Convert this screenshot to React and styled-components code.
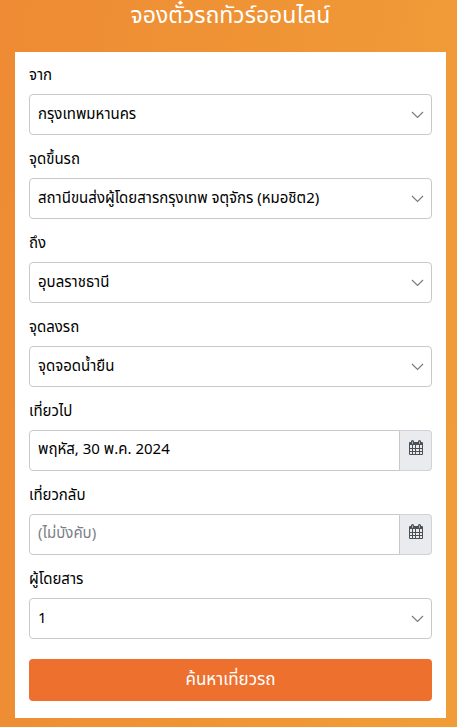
import React from "react";
import styled, { createGlobalStyle } from "styled-components";

const GlobalStyle = createGlobalStyle`
  *, *::before, *::after { box-sizing: border-box; }
  body {
    margin: 0;
    background: #ef9335;
    font-family: "Noto Sans Thai", "Open Sans", "Noto Sans", sans-serif;
    font-weight: 400;
    color: #000;
  }
  button, input, select { font-family: inherit; font-weight: inherit; color: inherit; }
`;

const Page = styled.main`
  min-height: 100vh;
  padding: 0 11px 9px 15px;
  background: linear-gradient(97deg, #ee8b34 0%, #ef9335 45%, #f09d39 100%);
`;

const Title = styled.h1`
  margin: 0;
  height: 52px;
  line-height: 32px;
  font-size: 23px;
  font-weight: 400;
  text-align: center;
  white-space: nowrap;
  color: #fff;
`;

const Form = styled.form`
  padding: 10px 14px 17px;
  background: #fff;
`;

const Field = styled.div`
  margin-bottom: 11px;
`;

const Label = styled.label`
  display: block;
  height: 32px;
  line-height: 28px;
  font-size: 15px;
`;

const SelectWrap = styled.div`
  display: grid;
  align-items: center;
  & > * { grid-area: 1 / 1; }
`;

const Select = styled.select`
  appearance: none;
  width: 100%;
  height: 41px;
  padding: 0 32px 1px 8px;
  border: 1px solid #c8c9cb;
  border-radius: 4px;
  background: #fff;
  font-size: 15px;
`;

const Chevron = styled.svg`
  justify-self: end;
  margin-right: 8px;
  pointer-events: none;
`;

const InputGroup = styled.div`
  display: flex;
  height: 41px;
`;

const DateInput = styled.input`
  flex: 1;
  min-width: 0;
  padding: 0 8px 2px;
  border: 1px solid #c8c9cb;
  border-radius: 4px 0 0 4px;
  background: #fff;
  font-size: 15px;
  &::placeholder { color: #7b8086; opacity: 1; }
`;

const DateButton = styled.button`
  display: flex;
  justify-content: center;
  width: 32px;
  padding: 9px 0 0;
  border: 1px solid #ced4da;
  border-left: 0;
  border-radius: 0 4px 4px 0;
  background: #e9ebef;
`;

const Submit = styled.button`
  display: block;
  width: 100%;
  height: 42px;
  margin-top: 20px;
  padding: 0;
  border: 0;
  border-radius: 4px;
  background: #ed702e;
  color: #fff;
  font-size: 17px;
`;

function CalendarIcon() {
  return (
    <svg width="14" height="15" viewBox="0 0 14 15" aria-hidden="true">
      <rect x="0" y="2" width="14" height="13" rx="1" fill="#495057" />
      <path d="M2 3V1.5a1.5 1.5 0 0 1 3 0V3M9 3V1.5a1.5 1.5 0 0 1 3 0V3" fill="#495057" />
      <path d="M3.5 1.5V4M10.5 1.5V4" stroke="#a9b5c2" />
      <path
        d="M1 5h2v3H1zM4 5h2v3H4zM7 5h3v3H7zM11 5h2v3h-2zM1 9h2v2H1zM4 9h2v2H4zM7 9h3v2H7zM11 9h2v2h-2zM1 12h2v2H1zM4 12h2v2H4zM7 12h3v2H7zM11 12h2v2h-2z"
        fill="#e9ebef"
      />
    </svg>
  );
}

function SelectField({ id, label, value }) {
  return (
    <Field>
      <Label htmlFor={id}>{label}</Label>
      <SelectWrap>
        <Select id={id} defaultValue={value}>
          <option value={value}>{value}</option>
        </Select>
        <Chevron width="13" height="8" viewBox="0 0 13 8" aria-hidden="true">
          <path d="M1 1l5.5 5.5L12 1" fill="none" stroke="#7b7b7b" strokeWidth="1.2" />
        </Chevron>
      </SelectWrap>
    </Field>
  );
}

function DateField({ id, label, value, placeholder }) {
  return (
    <Field>
      <Label htmlFor={id}>{label}</Label>
      <InputGroup>
        <DateInput id={id} type="text" defaultValue={value} placeholder={placeholder} />
        <DateButton type="button" aria-label={label}>
          <CalendarIcon />
        </DateButton>
      </InputGroup>
    </Field>
  );
}

export default function App() {
  return (
    <>
      <GlobalStyle />
      <Page>
        <Title>จองตั๋วรถทัวร์ออนไลน์</Title>
        <Form onSubmit={(event) => event.preventDefault()}>
          <SelectField id="from" label="จาก" value="กรุงเทพมหานคร" />
          <SelectField id="pickup" label="จุดขึ้นรถ" value="สถานีขนส่งผู้โดยสารกรุงเทพ จตุจักร (หมอชิต2)" />
          <SelectField id="to" label="ถึง" value="อุบลราชธานี" />
          <SelectField id="dropoff" label="จุดลงรถ" value="จุดจอดน้ำยืน" />
          <DateField id="depart" label="เที่ยวไป" value="พฤหัส, 30 พ.ค. 2024" />
          <DateField id="return" label="เที่ยวกลับ" placeholder="(ไม่บังคับ)" />
          <SelectField id="passengers" label="ผู้โดยสาร" value="1" />
          <Submit type="submit">ค้นหาเที่ยวรถ</Submit>
        </Form>
      </Page>
    </>
  );
}
